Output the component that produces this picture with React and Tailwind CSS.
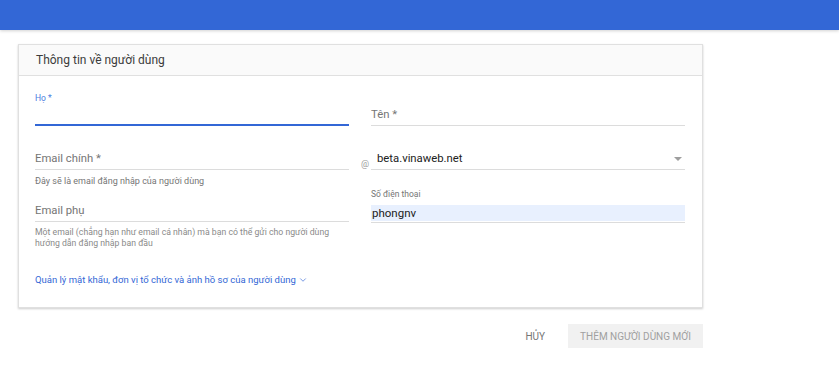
import { ChevronDown } from "lucide-react"

const font = { fontFamily: "Roboto, 'Noto Sans', sans-serif" }

const TextField = ({ placeholder, className = "" }) => (
  <div className={`h-[21px] border-b border-[#dcdcdc] text-[11.3px] leading-[20px] text-[#757575] ${className}`}>
    {placeholder}
  </div>
)

export default function App() {
  return (
    <div className="min-h-[374px] bg-white font-['Roboto',sans-serif]" style={font}>
      {/* top bar */}
      <div className="h-[30px] bg-[#3367d6] shadow-[0_1px_3px_rgba(0,0,0,0.18)]" />

      <div className="ml-[18px] mt-[14px] w-[685px]">
        <div className="border border-[#e0e0e0] bg-white shadow-[0_1px_2px_rgba(0,0,0,0.2)]">
          <div className="flex h-[31px] items-center border-b border-[#e0e0e0] bg-[#fafafa] px-[17px] text-[12px] text-[#3c3c3c]">
            Thông tin về người dùng
          </div>

          <div className="flex gap-[22px] px-[16px] pb-[20px]">
            {/* left column */}
            <div className="flex w-[314px] flex-col">
              <div className="mt-[16px] h-[12px] text-[8.5px] leading-[12px] text-[#4a7de0]">Họ *</div>
              <div className="h-[22px] border-b-2 border-[#3367d6]" />

              <TextField placeholder="Email chính *" className="mt-[23px]" />
              <div className="mt-[5px] text-[9px] leading-[12px] text-[#757575]">
                Đây sẽ là email đăng nhập của người dùng
              </div>

              <TextField placeholder="Email phụ" className="mt-[14px]" />
              <div className="mt-[5px] text-[8.7px] leading-[11px] text-[#8a8a8a]">
                Một email (chẳng hạn như email cá nhân) mà bạn có thể gửi cho người dùng
                <br />
                hướng dẫn đăng nhập ban đầu
              </div>

              <div className="mt-[24px] flex items-center gap-[2px] text-[9.5px] leading-[14px] text-[#3367d6]">
                Quản lý mật khẩu, đơn vị tổ chức và ảnh hồ sơ của người dùng
                <ChevronDown size={10} strokeWidth={1.6} />
              </div>
            </div>

            {/* right column */}
            <div className="flex w-[314px] flex-col">
              <TextField placeholder="Tên *" className="mt-[29px]" />

              <div className="relative mt-[23px] flex h-[21px] items-center justify-between border-b border-[#dcdcdc] pl-[6px] pr-[3px]">
                <span className="absolute left-[-10px] top-[10px] text-[9px] leading-[10px] text-[#999]">@</span>
                <span className="text-[11.3px] text-[#212121]">beta.vinaweb.net</span>
                <span className="h-0 w-0 border-x-[4px] border-t-[4px] border-x-transparent border-t-[#9e9e9e]" />
              </div>

              <div className="mt-[18px] h-[12px] text-[8.5px] leading-[12px] text-[#757575]">Số điện thoại</div>
              <div className="mt-[5px] border-b border-[#dcdcdc] pb-px">
                <div className="h-[16px] bg-[#e8f0fe] pl-[1px] text-[11.5px] leading-[16px] text-[#212121]">phongnv</div>
              </div>
            </div>
          </div>
        </div>

        <div className="mt-[16px] flex justify-end">
          <button className="mr-[7px] h-[24px] px-[16px] text-[10px] text-[#757575]">HỦY</button>
          <button className="h-[24px] w-[135px] bg-[#f1f1f1] text-[10px] text-[#a0a0a0]">
            THÊM NGƯỜI DÙNG MỚI
          </button>
        </div>
      </div>
    </div>
  )
}
